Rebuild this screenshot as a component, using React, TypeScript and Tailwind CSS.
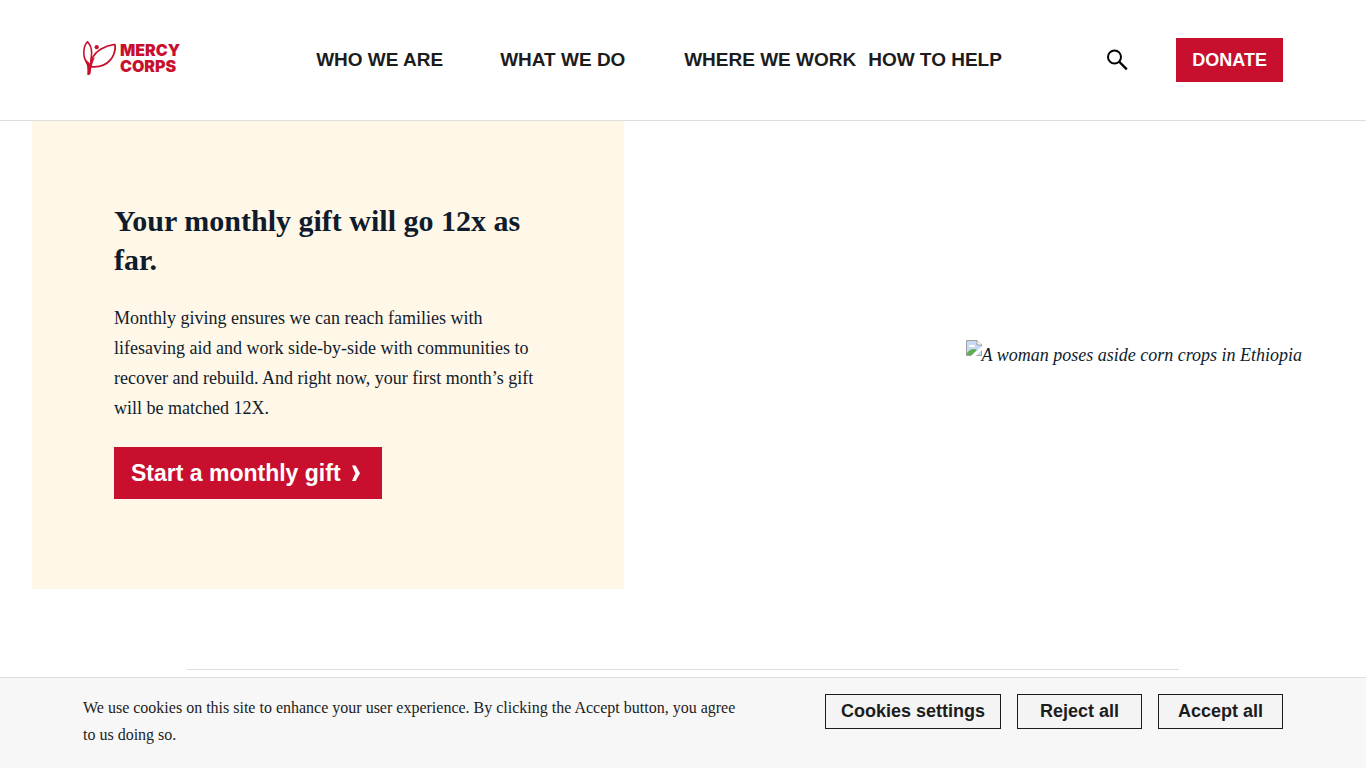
const NAV_ITEMS = ["WHO WE ARE", "WHAT WE DO", "WHERE WE WORK", "HOW TO HELP"];

const COOKIE_ACTIONS = ["Cookies settings", "Reject all", "Accept all"];

function Logo() {
  return (
    <a href="#home" aria-label="Mercy Corps" className="flex items-center gap-1 pb-1 text-[#c8102e]">
      <svg viewBox="0 0 33 35" className="h-[35px] w-[33px]" fill="none" stroke="currentColor" aria-hidden="true">
        <path d="M6.5 26C2.5 21 .8 17 .8 12C.8 7 2 3 4.5 .8C6.5 3 8.5 7 8.6 11C8.7 15 8 18 7.6 21" strokeWidth="1.6" />
        <path d="M32 3.3C22 4.5 12.5 9.5 9 18C8 21 7.6 24 7.2 27" strokeWidth="1.7" />
        <path d="M32 3.3C33.2 14 26 27.5 8 25.6" strokeWidth="1.8" />
        <path d="M1.8 17C3.4 22 5 26 4.2 33.5C6 34.8 7.8 33.4 7.8 31C8 27 9.4 22 12 16C9.4 18 7.8 20 7 22.5C5.5 21 3.6 19.5 1.8 17Z" fill="currentColor" stroke="none" />
        <circle cx="13.7" cy="6.2" r="2.1" fill="currentColor" stroke="none" />
      </svg>
      <span className="w-[62px] font-[Inter,sans-serif] text-[16px] leading-4 font-black">MERCY CORPS</span>
    </a>
  );
}

function Header() {
  return (
    <header className="flex h-[121px] items-center justify-between border-b border-[#dedede] bg-white px-[83px] font-['Liberation_Sans',Arial,sans-serif]">
      <Logo />
      <nav className="ml-20 grid grid-cols-[repeat(4,184px)] text-[19px] leading-6 font-bold text-[#1c1c1c]">
        {NAV_ITEMS.map((item) => (
          <a key={item} href="#menu" className="whitespace-nowrap">
            {item}
          </a>
        ))}
      </nav>
      <div className="flex items-center gap-12">
        <button type="button" aria-label="Search">
          <svg viewBox="0 0 22 22" className="size-[22px]" fill="none" stroke="#000" strokeWidth="2" aria-hidden="true">
            <circle cx="8.5" cy="8" r="6.5" />
            <path d="M13 12.5L20.8 20.3" strokeWidth="2.4" />
          </svg>
        </button>
        <a href="#donate" className="flex h-11 items-center bg-[#c8102e] px-4 text-[18px] font-bold text-white">
          DONATE
        </a>
      </div>
    </header>
  );
}

function BrokenImageIcon() {
  return (
    <svg viewBox="0 0 16 16" className="size-4 shrink-0" aria-hidden="true">
      <path d="M.5 .5H11L15.5 5V15.5H.5Z" fill="#c6d9f5" stroke="#a0a0a0" />
      <path d="M11 .5V5H15.5" fill="#fff" stroke="#a0a0a0" />
      <path d="M3 7a2 2 0 0 1 3-2a2 2 0 0 1 3 2Z" fill="#fff" />
      <path d="M1 15L1 13C4 9 8 8 11 10L6 15Z" fill="#5fae50" />
      <path d="M5 16L16 6V10L10 16Z" fill="#fff" />
    </svg>
  );
}

function Hero() {
  return (
    <section className="grid grid-cols-[5fr_6fr] px-8">
      <div className="bg-[#fff7e8] px-[82px] pt-20 pb-[90px]">
        <h1 className="text-[30px] leading-[39px] font-bold">Your monthly gift will go 12x as far.</h1>
        <p className="mt-6 text-[18px] leading-[30px]">
          Monthly giving ensures we can reach families with lifesaving aid and work side-by-side with communities to
          recover and rebuild. And right now, your first month’s gift will be matched 12X.
        </p>
        <a
          href="#monthly"
          className="mt-6 inline-flex h-[52px] items-center gap-2 bg-[#c8102e] pr-[19px] pl-[17px] font-['Liberation_Sans',Arial,sans-serif] text-[23px] font-bold text-white"
        >
          Start a monthly gift
          <svg viewBox="0 0 14 20" className="h-5 w-[14px]" fill="currentColor" aria-hidden="true">
            <path d="M3 2.5H6.6L11 10.3L6.6 18H3L6.4 10.3Z" />
          </svg>
        </a>
      </div>
      <figure className="flex items-center justify-end pr-8 text-[18px] leading-[30px] italic">
        <div className="flex items-start">
          <BrokenImageIcon />
          <span>A woman poses aside corn crops in Ethiopia</span>
        </div>
      </figure>
    </section>
  );
}

function CookieBar() {
  return (
    <aside
      aria-label="Cookie notice"
      className="fixed inset-x-0 bottom-0 flex items-start justify-between border-t border-[#dcdcdc] bg-[#f7f7f7] px-[83px] pt-4 pb-5 text-[#1c1c1c]"
    >
      <p className="max-w-[660px] text-[16px] leading-[27px]">
        We use cookies on this site to enhance your user experience. By clicking the Accept button, you agree to us
        doing so.
      </p>
      <div className="flex gap-4 font-['Liberation_Sans',Arial,sans-serif]">
        {COOKIE_ACTIONS.map((label) => (
          <button
            key={label}
            type="button"
            className="h-[35px] min-w-[125px] border border-[#1c1c1c] bg-[#f4f4f4] px-[15px] text-[18px] font-bold whitespace-nowrap"
          >
            {label}
          </button>
        ))}
      </div>
    </aside>
  );
}

export default function App() {
  return (
    <div className="bg-white font-['Liberation_Serif','Times_New_Roman',serif] text-[#0f1c2c]">
      <Header />
      <main className="pb-[98px]">
        <Hero />
        <hr className="mx-[187px] mt-20 border-[#dedede]" />
      </main>
      <CookieBar />
    </div>
  );
}
